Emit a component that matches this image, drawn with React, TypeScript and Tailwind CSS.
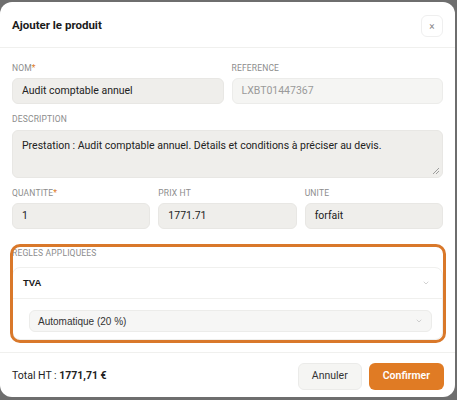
import React from 'react';

const Chevron = ({ className }: { className?: string }) => (
  <svg className={className} fill="none" stroke="currentColor" viewBox="0 0 24 24">
    <path strokeLinecap="round" strokeLinejoin="round" strokeWidth={2} d="M6 9l6 6 6-6" />
  </svg>
);

function Label({ children, required }: { children: React.ReactNode; required?: boolean }) {
  return (
    <div className="text-[8.5px] leading-[12px] uppercase tracking-[0.02em] text-[#8c8c8c] mb-[4px]">
      {children}
      {required && <span className="text-[#e07b24]">*</span>}
    </div>
  );
}

function Field({ value, muted }: { value: string; muted?: boolean }) {
  return (
    <div
      className={
        muted
          ? 'h-[26px] rounded-[6px] border border-[#ececea] bg-[#f5f5f3] px-[9px] flex items-center text-[10.5px] text-[#9a9a9a]'
          : 'h-[26px] rounded-[6px] border border-[#e8e7e4] bg-[#efeeeb] px-[9px] flex items-center text-[10.5px] text-[#222]'
      }
    >
      {value}
    </div>
  );
}

export default function App() {
  return (
    <div className="h-[400px] w-[457px] bg-[#6e6e6e] pt-[2px] font-['Roboto',sans-serif]">
      <div className="w-[455px] h-[395px] bg-white rounded-[12px] flex flex-col overflow-hidden">
        {/* Header */}
        <div className="h-[46px] pt-[3px] flex items-center justify-between pl-[12px] pr-[12px] border-b border-[#f0f0ee]">
          <h2 className="text-[11.5px] font-bold text-[#1a1a1a]">Ajouter le produit</h2>
          <button className="w-[22px] h-[22px] rounded-[6px] border border-[#efefef] flex items-center justify-center text-[#888] text-[10px]">
            ×
          </button>
        </div>

        {/* Body */}
        <div className="flex-1 px-[12px] pt-[14px]">
          <div className="grid grid-cols-2 gap-[8px]">
            <div>
              <Label required>Nom</Label>
              <Field value="Audit comptable annuel" />
            </div>
            <div>
              <Label>Reference</Label>
              <Field value="LXBT01447367" muted />
            </div>
          </div>

          <div className="mt-[9px]">
            <Label>Description</Label>
            <div className="relative h-[48px] mt-[5px] rounded-[6px] border border-[#e8e7e4] bg-[#efeeeb] px-[9px] pt-[7px] text-[10.5px] text-[#222]">
              Prestation : Audit comptable annuel. Détails et conditions à préciser au devis.
              <svg className="absolute right-[3px] bottom-[3px] w-[6px] h-[6px] text-[#888]" viewBox="0 0 6 6" stroke="currentColor">
                <path d="M0 6L6 0M3 6L6 3" strokeWidth={0.8} />
              </svg>
            </div>
          </div>

          <div className="mt-[9px] grid grid-cols-3 gap-[8px]">
            <div>
              <Label required>Quantite</Label>
              <Field value="1" />
            </div>
            <div>
              <Label>Prix HT</Label>
              <Field value="1771.71" />
            </div>
            <div>
              <Label>Unite</Label>
              <Field value="forfait" />
            </div>
          </div>

          {/* Règles */}
          <div className="relative mt-[18px]">
            <Label>Regles appliquees</Label>
            <div className="mt-[8px] border border-[#f0f0ee] rounded-[8px]">
              <div className="h-[31px] flex items-center justify-between pl-[10px] pr-[12px] border-b border-[#f0f0ee]">
                <span className="text-[9.5px] font-bold text-[#1a1a1a] font-['Liberation_Sans',sans-serif]">TVA</span>
                <Chevron className="w-[8px] h-[8px] text-[#bbb]" />
              </div>
              <div className="pl-[16px] pr-[10px] pt-[11px] pb-[7px]">
                <div className="h-[22px] rounded-[6px] border border-[#ececea] bg-[#f6f6f5] px-[8px] flex items-center justify-between">
                  <span className="text-[10px] text-[#333] font-['Liberation_Sans',sans-serif]">Automatique (20 %)</span>
                  <Chevron className="w-[8px] h-[8px] text-[#bbb]" />
                </div>
              </div>
            </div>
            {/* annotation outline */}
            <div className="absolute -left-[2px] -right-[3px] -top-[3px] -bottom-[3px] border-[3px] border-[#d9782a] rounded-[10px] pointer-events-none" />
          </div>
        </div>

        {/* Footer */}
        <div className="h-[45px] pt-[2px] border-t border-[#f0f0ee] flex items-center justify-between pl-[12px] pr-[11px]">
          <div className="text-[10.5px] text-[#222]">
            Total HT : <span className="font-bold">1771,71 €</span>
          </div>
          <div className="flex gap-[7px]">
            <button className="h-[27px] px-[13px] rounded-[6px] border border-[#ebebe9] bg-[#f5f5f3] text-[10.5px] text-[#333]">
              Annuler
            </button>
            <button className="h-[27px] px-[14px] rounded-[6px] bg-[#e07b24] text-[10.5px] font-semibold text-white">
              Confirmer
            </button>
          </div>
        </div>
      </div>
    </div>
  );
}
